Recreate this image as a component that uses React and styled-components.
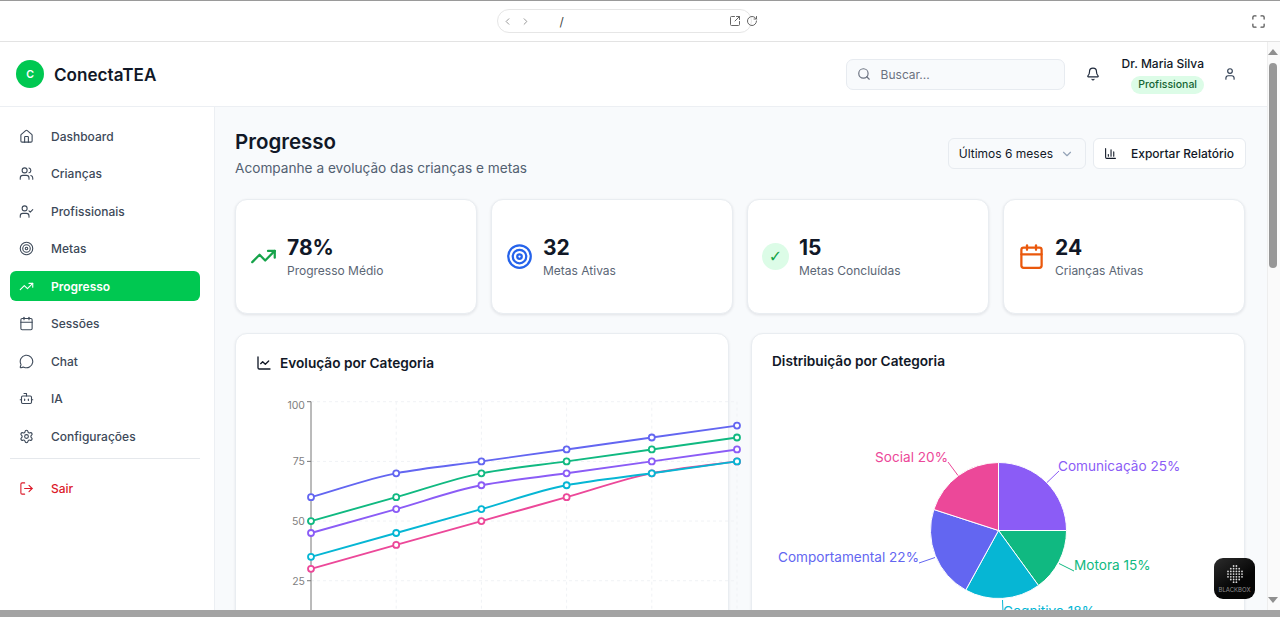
import React from 'react';
import styled, { createGlobalStyle } from 'styled-components';
import {
	Bell, Bot, Calendar, ChartColumn, ChartLine, ChevronDown, ChevronLeft, ChevronRight,
	House, LogOut, Maximize, MessageCircle, RotateCw, Search, Settings, SquareArrowOutUpRight, Target,
	TrendingUp, User, UserCheck, Users
} from 'lucide-react';

const GlobalStyle = createGlobalStyle`
	* { box-sizing: border-box; }
	html, body { margin: 0; height: 100%; overflow: hidden; }
	body {
		background: #fff;
		color: #111827;
		font-family: Inter, "Liberation Sans", sans-serif;
	}
`;

const Window = styled.div`
	border-top: 1px solid #9a9a9a;
	display: flex;
	flex-direction: column;
	height: 617px;
	overflow: hidden;
	position: relative;
	width: 1280px;
`;

const TopNotch = styled.div`
	background: #111;
	height: 1px;
	position: absolute;
	right: 25px;
	top: 0;
	width: 50px;
`;

const Chrome = styled.div`
	align-items: center;
	background: #fff;
	border-bottom: 1px solid #e3e3e3;
	display: flex;
	flex: 0 0 41px;
	justify-content: center;
	padding-right: 32px;
	position: relative;
`;

const AddressBar = styled.div`
	align-items: center;
	border: 1px solid #e6e6e6;
	border-radius: 12px;
	color: #8f8f8f;
	display: flex;
	height: 24px;
	padding: 0 5px 0 4px;
	width: 255px;
`;

const ForwardIcon = styled(ChevronRight)`
	margin-left: 7px;
`;

const Slash = styled.span`
	color: #444;
	flex: 1;
	font-size: 12px;
	margin-left: 29px;
`;

const OpenIcon = styled(SquareArrowOutUpRight)`
	color: #666;
`;

const ReloadIcon = styled(RotateCw)`
	color: #666;
	margin: 0 -12px 0 5px;
`;

const ExpandButton = styled.div`
	color: #555;
	display: flex;
	position: absolute;
	right: 14px;
	top: 13px;
`;

const Viewport = styled.div`
	display: flex;
	flex: 1;
	min-height: 0;
`;

const Page = styled.div`
	display: flex;
	flex: 1;
	flex-direction: column;
	min-width: 0;
`;

const Header = styled.header`
	align-items: center;
	background: #fff;
	border-bottom: 1px solid #eceff3;
	display: flex;
	flex: 0 0 65px;
	justify-content: space-between;
	padding: 0 30px 0 16px;
`;

const Brand = styled.div`
	align-items: center;
	display: flex;
	gap: 10px;
`;

const BrandMark = styled.div`
	align-items: center;
	background: #00c851;
	border-radius: 50%;
	color: #fff;
	display: flex;
	font-size: 10.5px;
	font-weight: 600;
	height: 28px;
	justify-content: center;
	width: 28px;
`;

const BrandName = styled.div`
	font-size: 17.1px;
	font-weight: 600;
`;

const HeaderTools = styled.div`
	align-items: center;
	display: flex;
`;

const SearchBox = styled.div`
	align-items: center;
	background: #f8fafc;
	border: 1px solid #e7ebf0;
	border-radius: 7px;
	color: #6b7280;
	display: flex;
	font-size: 12px;
	gap: 10px;
	height: 31px;
	padding: 0 10px;
	width: 219px;
`;

const BellButton = styled.div`
	color: #1e293b;
	display: flex;
	margin: 0 22px 0 21px;
`;

const UserBlock = styled.div`
	align-items: flex-end;
	display: flex;
	flex-direction: column;
	gap: 5px;
	margin: 2px 19px 0 0;
`;

const UserName = styled.div`
	font-size: 12px;
	font-weight: 500;
`;

const RoleBadge = styled.div`
	background: #dcfce7;
	border-radius: 9px;
	color: #166534;
	font-size: 10.5px;
	font-weight: 500;
	line-height: 18px;
	padding: 0 7px;
`;

const Body = styled.div`
	display: flex;
	flex: 1;
	min-height: 0;
`;

const Sidebar = styled.aside`
	background: #fff;
	border-right: 1px solid #eceff3;
	flex: 0 0 215px;
	padding: 14px 14px 0 10px;
`;

const NavList = styled.nav`
	display: flex;
	flex-direction: column;
	gap: 7.5px;
`;

const NavItem = styled.div`
	align-items: center;
	background: ${props => props.$active ? '#00c851' : 'transparent'};
	border-radius: 6px;
	color: ${props => props.$active ? '#fff' : props.$danger ? '#dc1a2a' : '#3d4959'};
	display: flex;
	font-size: 12px;
	font-weight: ${props => props.$active ? 600 : 500};
	gap: 17px;
	height: 30px;
	padding-left: 9px;

	svg {
		stroke-width: 1.75;
	}
`;

const NavDivider = styled.div`
	border-top: 1px solid #e5e8ec;
	margin: 7px 0 14.5px;
`;

const Main = styled.main`
	background: #f8fafc;
	flex: 1;
	min-width: 0;
	overflow: hidden;
	padding: 22px 22px 0 20px;
`;

const TitleRow = styled.div`
	align-items: flex-start;
	display: flex;
	justify-content: space-between;
	margin-bottom: 22px;
`;

const Title = styled.h1`
	font-size: 20.5px;
	font-weight: 600;
	line-height: 26px;
	margin: 0 0 4px;
`;

const Subtitle = styled.p`
	color: #526071;
	font-size: 13.65px;
	line-height: 18px;
	margin: 0;
`;

const Actions = styled.div`
	display: flex;
	gap: 7px;
	margin: 9px -1px 0 0;
`;

const ActionButton = styled.div`
	align-items: center;
	background: ${props => props.$plain ? '#fff' : '#f8fafc'};
	border: 1px solid #e7ebf0;
	border-radius: 6px;
	color: #111827;
	display: flex;
	font-size: 12px;
	font-weight: ${props => props.$plain ? 500 : 400};
	gap: ${props => props.$plain ? '14px' : '7px'};
	height: 31px;
	padding: 0 11px 0 10px;
`;

const StatsGrid = styled.div`
	display: grid;
	gap: 14px;
	grid-template-columns: repeat(4, 1fr);
	margin-bottom: 19px;
`;

const StatCard = styled.div`
	align-items: center;
	background: #fff;
	border: 1px solid #e9edf1;
	border-radius: 12px;
	box-shadow: 0 1px 3px rgba(15, 23, 42, 0.1);
	display: flex;
	gap: 10px;
	height: 115px;
	padding: 0 14px;
`;

const StatIcon = styled.div`
	align-items: center;
	color: ${props => props.$color};
	display: flex;
	flex: 0 0 27px;
	height: 27px;
	justify-content: center;
`;

const CheckCircle = styled(StatIcon)`
	background: #dcfce7;
	border-radius: 50%;
	font-family: "DejaVu Sans", sans-serif;
	font-size: 16px;
`;

const StatValue = styled.div`
	font-size: 21px;
	font-weight: 700;
	line-height: 28px;
`;

const StatLabel = styled.div`
	color: #5b6675;
	font-size: 12px;
	line-height: 17px;
`;

const ChartsGrid = styled.div`
	display: grid;
	gap: 22px;
	grid-template-columns: 1fr 1fr;
`;

const ChartCard = styled.div`
	background: #fff;
	border: 1px solid #e9edf1;
	border-radius: 12px;
	box-shadow: 0 1px 3px rgba(15, 23, 42, 0.08);
	height: 330px;
	padding: 19px 20px;
	position: relative;
`;

const ChartTitle = styled.div`
	align-items: center;
	display: flex;
	font-size: 13.65px;
	font-weight: 600;
	gap: 8px;
	line-height: 20px;
	margin-top: ${props => props.$plain ? '-2px' : '0'};
`;

const ChartSvg = styled.svg`
	left: 0;
	overflow: visible;
	position: absolute;
	top: 0;
`;

const ScrollTrack = styled.div`
	align-items: center;
	background: #fafafa;
	border-left: 1px solid #eee;
	display: flex;
	flex: 0 0 13px;
	flex-direction: column;
	min-width: 0;
	padding: 7px 3px 7px 0;
`;

const ScrollThumb = styled.div`
	background: #979797;
	border-radius: 4px;
	flex: 0 0 205px;
	margin-bottom: auto;
	margin-top: 8px;
	width: 8px;
`;

const ScrollArrow = styled.div`
	border-left: 5px solid transparent;
	border-right: 5px solid transparent;
	${props => props.$down ? 'border-top: 6px solid #8f8f8f;' : 'border-bottom: 6px solid #8f8f8f;'}
	flex-shrink: 0;
	height: 0;
	width: 0;
`;

const BottomStrip = styled.div`
	background: #a3a3a3;
	flex: 0 0 7px;
`;

const BlackBadge = styled.div`
	align-items: center;
	background: linear-gradient(145deg, #2c2c2c, #050505 60%);
	border-radius: 9px;
	bottom: 18px;
	color: #8f8f8f;
	display: flex;
	flex-direction: column;
	font-size: 6px;
	gap: 2px;
	height: 41px;
	justify-content: center;
	position: absolute;
	right: 25px;
	width: 41px;
`;

const navItems = [
	{ label: 'Dashboard', icon: House },
	{ label: 'Crianças', icon: Users },
	{ label: 'Profissionais', icon: UserCheck },
	{ label: 'Metas', icon: Target },
	{ label: 'Progresso', icon: TrendingUp, active: true },
	{ label: 'Sessões', icon: Calendar },
	{ label: 'Chat', icon: MessageCircle },
	{ label: 'IA', icon: Bot },
	{ label: 'Configurações', icon: Settings }
];

const series = [
	{ color: '#8b5cf6', values: [45, 55, 65, 70, 75, 80] },
	{ color: '#10b981', values: [50, 60, 70, 75, 80, 85] },
	{ color: '#ec4899', values: [30, 40, 50, 60, 70, 75] },
	{ color: '#06b6d4', values: [35, 45, 55, 65, 70, 75] },
	{ color: '#6366f1', values: [60, 70, 75, 80, 85, 90] }
];

const slices = [
	{ color: '#8b5cf6', value: 25 },
	{ color: '#10b981', value: 15 },
	{ color: '#06b6d4', value: 18 },
	{ color: '#6366f1', value: 22 },
	{ color: '#ec4899', value: 20 }
];

const pieLabels = [
	{ color: '#8b5cf6', text: 'Comunicação 25%', x: 306, y: 137, anchor: 'start', line: 'M 295 148.5 L 307 137' },
	{ color: '#10b981', text: 'Motora 15%', x: 322, y: 236, anchor: 'start', line: 'M 307 229.5 L 322 237' },
	{ color: '#06b6d4', text: 'Cognitivo 18%', x: 251, y: 282, anchor: 'start', line: 'M 250.5 266 L 251 278' },
	{ color: '#6366f1', text: 'Comportamental 22%', x: 167, y: 228, anchor: 'end', line: 'M 183 223.5 L 167 229' },
	{ color: '#ec4899', text: 'Social 20%', x: 196, y: 128, anchor: 'end', line: 'M 206 141.5 L 196 128' }
];

// monotone cubic through the points, same shape as the chart's line curve
const monotonePath = (points) => {
	const n = points.length;
	const dx = [], slope = [], tangent = [];
	for (let i = 0; i < n - 1; i++) {
		dx[i] = points[i + 1][0] - points[i][0];
		slope[i] = (points[i + 1][1] - points[i][1]) / dx[i];
	}
	tangent[0] = slope[0];
	tangent[n - 1] = slope[n - 2];
	for (let i = 1; i < n - 1; i++) {
		tangent[i] = slope[i - 1] * slope[i] <= 0 ? 0 : (2 * slope[i - 1] * slope[i]) / (slope[i - 1] + slope[i]);
	}
	let d = `M ${points[0][0]} ${points[0][1]}`;
	for (let i = 0; i < n - 1; i++) {
		const c = dx[i] / 3;
		d += ` C ${points[i][0] + c} ${points[i][1] + tangent[i] * c}, ${points[i + 1][0] - c} ${points[i + 1][1] - tangent[i + 1] * c}, ${points[i + 1][0]} ${points[i + 1][1]}`;
	}
	return d;
};

const LineChart = () => {
	const xs = [75, 160.2, 245.4, 330.6, 415.8, 501];
	const yFor = (v) => 306.4 - v * 2.387;
	const ticks = [100, 75, 50, 25];

	return (
		<ChartSvg width="494" height="330">
			{ticks.map(t => (
				<line key={t} x1="75" x2="501" y1={yFor(t)} y2={yFor(t)} stroke="#f0f2f5" strokeDasharray="3 3" />
			))}
			{xs.slice(1).map(x => (
				<line key={x} x1={x} x2={x} y1={yFor(100)} y2="330" stroke="#f0f2f5" strokeDasharray="3 3" />
			))}
			<line x1="75" x2="75" y1={yFor(100)} y2="330" stroke="#777" />
			{ticks.map(t => (
				<g key={t}>
					<line x1="71" x2="75" y1={yFor(t)} y2={yFor(t)} stroke="#777" />
					<text x="69" y={yFor(t) + (t === 100 ? 7 : 4)} textAnchor="end" fontSize="10.5" fill="#808080">{t}</text>
				</g>
			))}
			{series.map(s => (
				<g key={s.color}>
					<path d={monotonePath(s.values.map((v, i) => [xs[i], yFor(v)]))} fill="none" stroke={s.color} strokeWidth="1.9" />
					{s.values.map((v, i) => (
						<circle key={i} cx={xs[i]} cy={yFor(v)} r="3" fill="#fff" stroke={s.color} strokeWidth="1.8" />
					))}
				</g>
			))}
		</ChartSvg>
	);
};

const PieChart = () => {
	const cx = 246.5, cy = 196.5, r = 68;
	let angle = -Math.PI / 2;

	return (
		<ChartSvg width="494" height="330">
			{slices.map(s => {
				const start = angle;
				angle += (s.value / 100) * Math.PI * 2;
				const x1 = cx + r * Math.cos(start), y1 = cy + r * Math.sin(start);
				const x2 = cx + r * Math.cos(angle), y2 = cy + r * Math.sin(angle);
				return (
					<path
						key={s.color}
						d={`M ${cx} ${cy} L ${x1} ${y1} A ${r} ${r} 0 0 1 ${x2} ${y2} Z`}
						fill={s.color}
						stroke="#fff"
					/>
				);
			})}
			{pieLabels.map(l => (
				<g key={l.text}>
					<path d={l.line} fill="none" stroke={l.color} />
					<text x={l.x} y={l.y} textAnchor={l.anchor} fontSize="13.6" fill={l.color}>{l.text}</text>
				</g>
			))}
		</ChartSvg>
	);
};

const BadgeDots = () => {
	const rows = [2, 4, 6, 6, 6, 4, 2];
	return (
		<svg width="18" height="20" viewBox="0 0 18 20">
			{rows.map((count, row) =>
				Array.from({ length: count }).map((_, i) => (
					<circle key={`${row}-${i}`} cx={9 + (i - (count - 1) / 2) * 2.8} cy={2 + row * 2.7} r="0.9" fill="#d8d8d8" />
				))
			)}
		</svg>
	);
};

export default function App() {
	return (
		<Window>
			<GlobalStyle />
			<TopNotch />
			<Chrome>
				<AddressBar>
					<ChevronLeft size={11} />
					<ForwardIcon size={11} />
					<Slash>/</Slash>
					<OpenIcon size={12} />
					<ReloadIcon size={12} />
				</AddressBar>
				<ExpandButton><Maximize size={15} /></ExpandButton>
			</Chrome>
			<Viewport>
				<Page>
					<Header>
						<Brand>
							<BrandMark>C</BrandMark>
							<BrandName>ConectaTEA</BrandName>
						</Brand>
						<HeaderTools>
							<SearchBox>
								<Search size={14} />
								Buscar...
							</SearchBox>
							<BellButton><Bell size={14} /></BellButton>
							<UserBlock>
								<UserName>Dr. Maria Silva</UserName>
								<RoleBadge>Profissional</RoleBadge>
							</UserBlock>
							<User size={14} color="#334155" />
						</HeaderTools>
					</Header>
					<Body>
						<Sidebar>
							<NavList>
								{navItems.map(item => (
									<NavItem key={item.label} $active={item.active}>
										<item.icon size={15} />
										{item.label}
									</NavItem>
								))}
							</NavList>
							<NavDivider />
							<NavItem $danger>
								<LogOut size={15} />
								Sair
							</NavItem>
						</Sidebar>
						<Main>
							<TitleRow>
								<div>
									<Title>Progresso</Title>
									<Subtitle>Acompanhe a evolução das crianças e metas</Subtitle>
								</div>
								<Actions>
									<ActionButton>
										Últimos 6 meses
										<ChevronDown size={14} color="#94a3b8" />
									</ActionButton>
									<ActionButton $plain>
										<ChartColumn size={13} />
										Exportar Relatório
									</ActionButton>
								</Actions>
							</TitleRow>
							<StatsGrid>
								<StatCard>
									<StatIcon $color="#16a34a"><TrendingUp size={27} /></StatIcon>
									<div>
										<StatValue>78%</StatValue>
										<StatLabel>Progresso Médio</StatLabel>
									</div>
								</StatCard>
								<StatCard>
									<StatIcon $color="#2563eb"><Target size={27} /></StatIcon>
									<div>
										<StatValue>32</StatValue>
										<StatLabel>Metas Ativas</StatLabel>
									</div>
								</StatCard>
								<StatCard>
									<CheckCircle $color="#16a34a">✓</CheckCircle>
									<div>
										<StatValue>15</StatValue>
										<StatLabel>Metas Concluídas</StatLabel>
									</div>
								</StatCard>
								<StatCard>
									<StatIcon $color="#ea580c"><Calendar size={27} /></StatIcon>
									<div>
										<StatValue>24</StatValue>
										<StatLabel>Crianças Ativas</StatLabel>
									</div>
								</StatCard>
							</StatsGrid>
							<ChartsGrid>
								<ChartCard>
									<LineChart />
									<ChartTitle><ChartLine size={16} />Evolução por Categoria</ChartTitle>
								</ChartCard>
								<ChartCard>
									<PieChart />
									<ChartTitle $plain>Distribuição por Categoria</ChartTitle>
								</ChartCard>
							</ChartsGrid>
						</Main>
					</Body>
				</Page>
				<ScrollTrack>
					<ScrollArrow />
					<ScrollThumb />
					<ScrollArrow $down />
				</ScrollTrack>
			</Viewport>
			<BottomStrip />
			<BlackBadge>
				<BadgeDots />
				BLACKBOX
			</BlackBadge>
		</Window>
	);
}
